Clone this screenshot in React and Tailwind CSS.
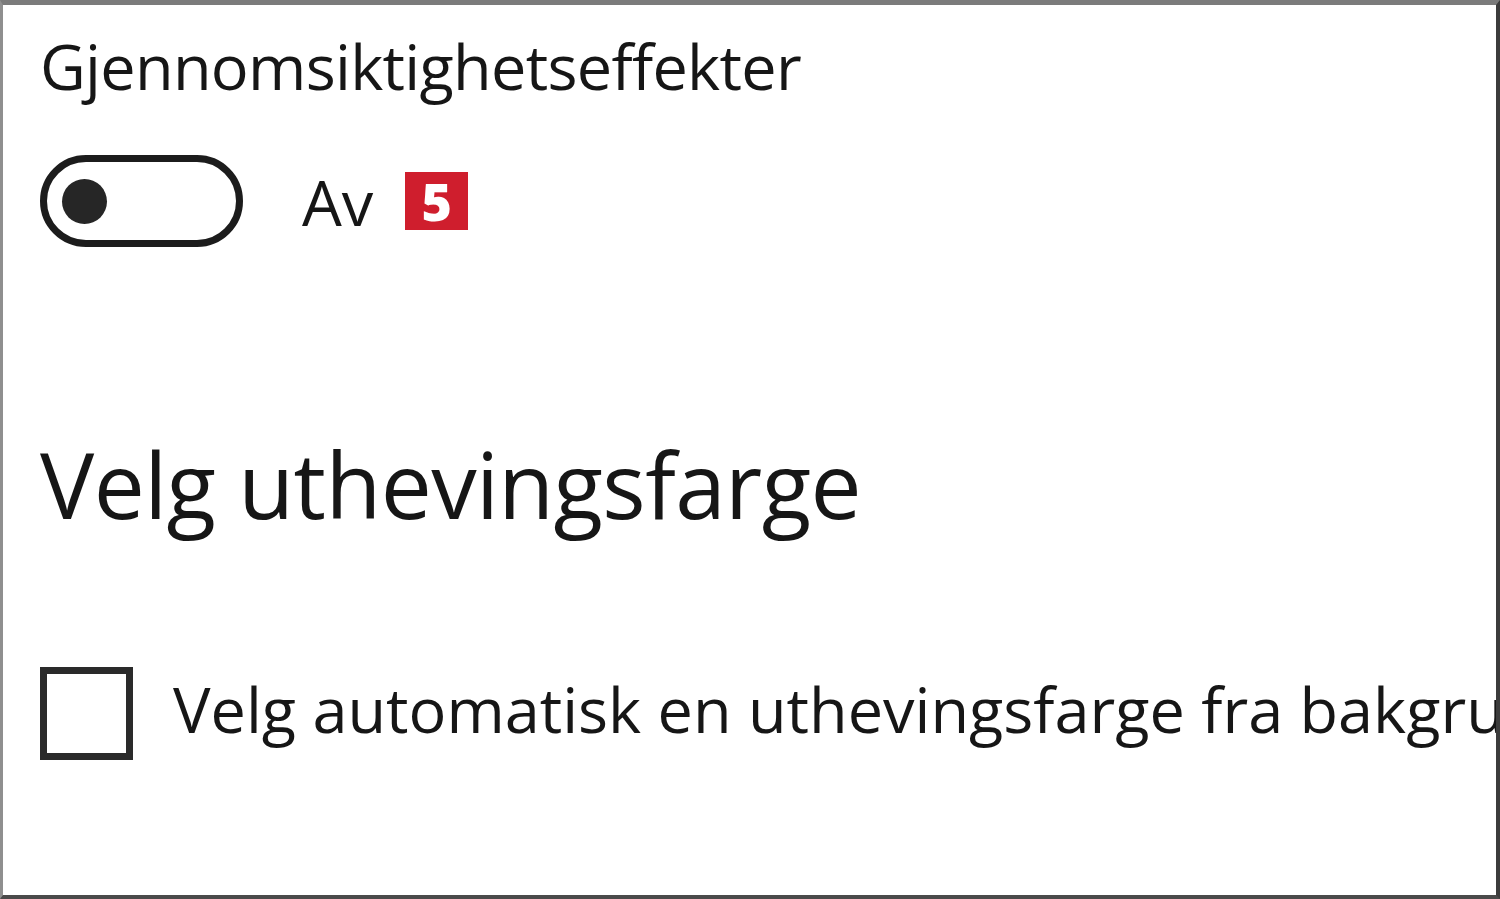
import React from "react";

const font = { fontFamily: '"Open Sans", "Noto Sans", sans-serif' };

const Toggle = () => (
    <div className="w-[203px] h-[92px] rounded-full border-[7px] border-[#1c1c1c] flex items-center pl-[15px] shrink-0">
        <div className="w-[45px] h-[45px] rounded-full bg-[#262626]" />
    </div>
);

const Badge = ({ n }) => (
    <div className="w-[63px] h-[58px] bg-[#cf1e2d] flex items-center justify-center text-white text-[52px] font-extrabold leading-none shrink-0">
        {n}
    </div>
);

const App = () => {
    return (
        <div
            style={font}
            className="w-[1500px] h-[899px] bg-white text-[#161616] overflow-hidden border-t-[5px] border-t-[#7b7b7b] border-l-[3px] border-l-[#8f8f8f] border-r-[4px] border-r-[#3c3c3c] border-b-[4px] border-b-[#4a4a4a]"
        >
            <div className="pl-[37px] flex flex-col whitespace-nowrap">
                {/* transparency effects */}
                <h2 className="mt-[29px] text-[63px] leading-none tracking-[-0.7px]">Gjennomsiktighetseffekter</h2>
                <div className="mt-[58px] flex items-center">
                    <Toggle />
                    <span className="ml-[59px] text-[63px] leading-none">Av</span>
                    <span className="ml-[32px]">
                        <Badge n="5" />
                    </span>
                </div>

                {/* accent color */}
                <h1 className="mt-[192px] text-[91px] leading-none tracking-[-0.6px]">Velg uthevingsfarge</h1>
                <div className="mt-[137px] flex items-start">
                    <div className="w-[93px] h-[93px] border-[7px] border-[#2a2a2a] shrink-0" />
                    <span className="ml-[40px] mt-[10px] text-[63px] leading-none">
                        Velg automatisk en uthevingsfarge fra bakgrunnen min
                    </span>
                </div>
            </div>
        </div>
    );
};

export default App;
